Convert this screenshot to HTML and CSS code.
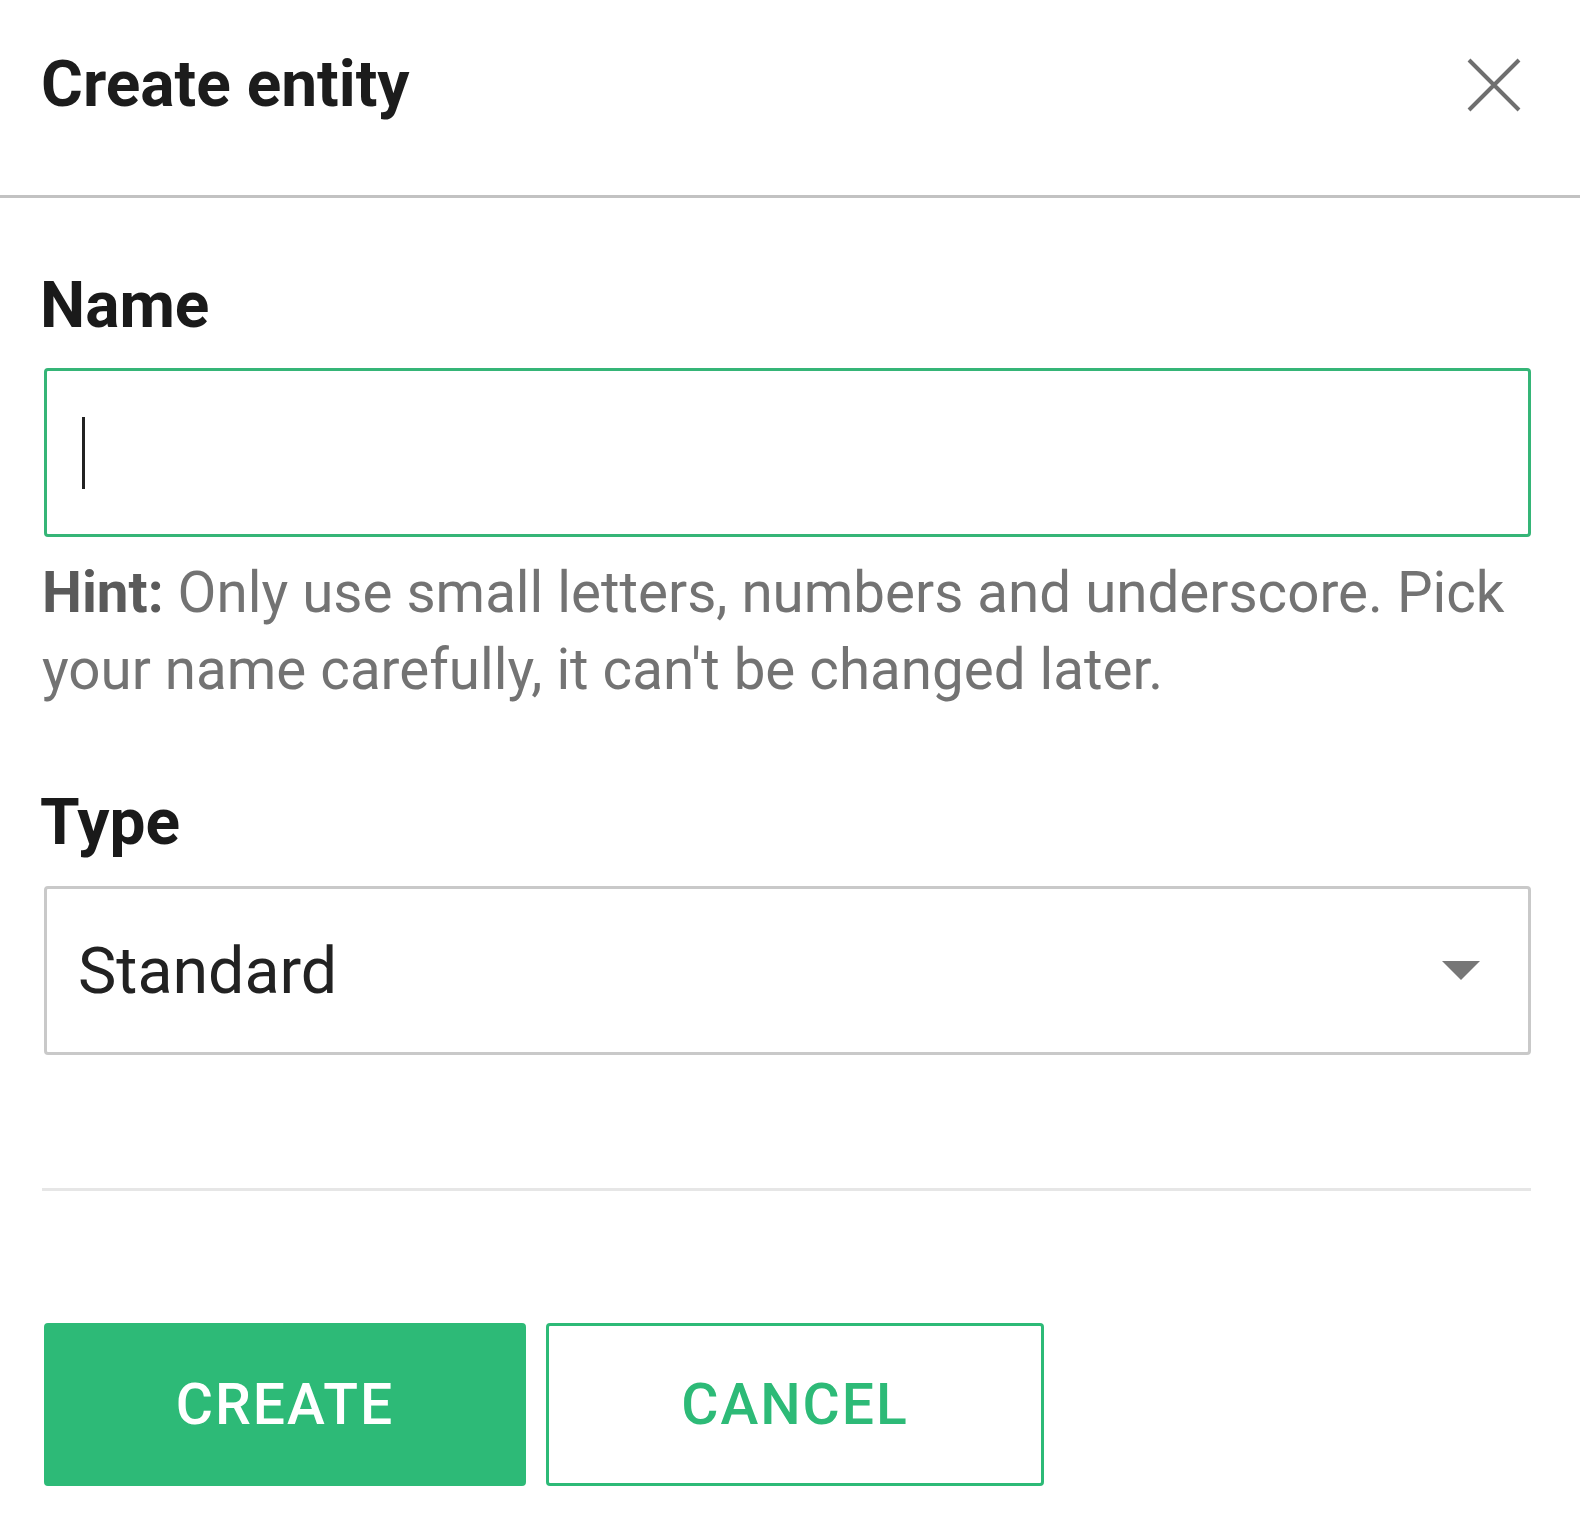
FILE: index.html
```html
<!DOCTYPE html>
<html lang="en">
<head>
<meta charset="utf-8">
<title>Create entity</title>
<link rel="stylesheet" href="styles.css">
</head>
<body>
<div class="dialog">
  <div class="header">
    <h1 class="title">Create entity</h1>
    <button class="close" aria-label="Close">
      <svg width="56" height="56" viewBox="0 0 56 56"><path d="M3 3 L53 53 M53 3 L3 53" stroke="#6f6f6f" stroke-width="4" fill="none"/></svg>
    </button>
  </div>
  <div class="content">
    <label class="label label-name">Name</label>
    <div class="input"><span class="caret"></span></div>
    <p class="hint"><b>Hint:</b> Only use small letters, numbers and underscore. Pick your name carefully, it can't be changed later.</p>
    <label class="label label-type">Type</label>
    <div class="select">
      <span class="select-value">Standard</span>
      <span class="arrow"></span>
    </div>
    <div class="divider"></div>
    <div class="actions">
      <button class="btn btn-primary">CREATE</button>
      <button class="btn btn-outline">CANCEL</button>
    </div>
  </div>
</div>
</body>
</html>
```
FILE: styles.css
```css
html, body {
  margin: 0;
  padding: 0;
  background: #ffffff;
}
body {
  font-family: Roboto, "Liberation Sans", Arial, sans-serif;
  color: #1c1c1c;
}
.dialog {
  width: 1580px;
}
.header {
  box-sizing: border-box;
  height: 198px;
  border-bottom: 3px solid #c2c2c2;
  display: flex;
  align-items: flex-start;
  justify-content: space-between;
  padding: 53px 58px 0 41px;
}
.title {
  margin: 0;
  font-size: 64px;
  line-height: 64px;
  font-weight: 700;
  color: #1c1c1c;
}
.close {
  margin-top: 4px;
  padding: 0;
  border: 0;
  background: transparent;
  width: 56px;
  height: 56px;
  display: block;
}
.close svg { display: block; }
.content {
  padding: 0 49px 0 40px;
  display: flex;
  flex-direction: column;
}
.label {
  display: block;
  font-size: 64px;
  line-height: 72px;
  font-weight: 700;
  color: #1a1a1a;
}
.label-name { margin-top: 72px; }
.label-type { margin-top: 78px; }
.input {
  box-sizing: border-box;
  margin: 26px 0 0 4px;
  height: 169px;
  border: 3px solid #35b577;
  border-radius: 4px;
  display: flex;
  align-items: center;
  padding-left: 35px;
}
.caret {
  display: block;
  width: 3px;
  height: 72px;
  background: #222;
}
.hint {
  margin: 18px 0 0 2px;
  font-size: 56.5px;
  line-height: 77px;
  color: #737373;
}
.hint b {
  font-weight: 700;
  color: #5a5a5a;
}
.select {
  box-sizing: border-box;
  margin: 27px 0 0 4px;
  height: 169px;
  border: 3px solid #c9c9c9;
  border-radius: 4px;
  display: flex;
  align-items: center;
  justify-content: space-between;
  padding: 0 48px 0 31px;
}
.select-value {
  font-size: 64.5px;
  color: #222;
}
.arrow {
  width: 0;
  height: 0;
  border-left: 19px solid transparent;
  border-right: 19px solid transparent;
  border-top: 19px solid #777;
}
.divider {
  margin: 133px 0 0 2px;
  height: 3px;
  background: #e6e6e6;
}
.actions {
  margin: 132px 0 0 4px;
  display: flex;
  gap: 20px;
}
.btn {
  box-sizing: border-box;
  height: 163px;
  border-radius: 4px;
  font-family: Roboto, "Liberation Sans", Arial, sans-serif;
  font-size: 57px;
  font-weight: 500;
  letter-spacing: 2px;
  cursor: pointer;
}
.btn-primary {
  width: 482px;
  background: #2dba77;
  border: 3px solid #2dba77;
  color: #ffffff;
}
.btn-outline {
  width: 498px;
  background: #ffffff;
  border: 3px solid #2dba77;
  color: #2dba77;
}
```
